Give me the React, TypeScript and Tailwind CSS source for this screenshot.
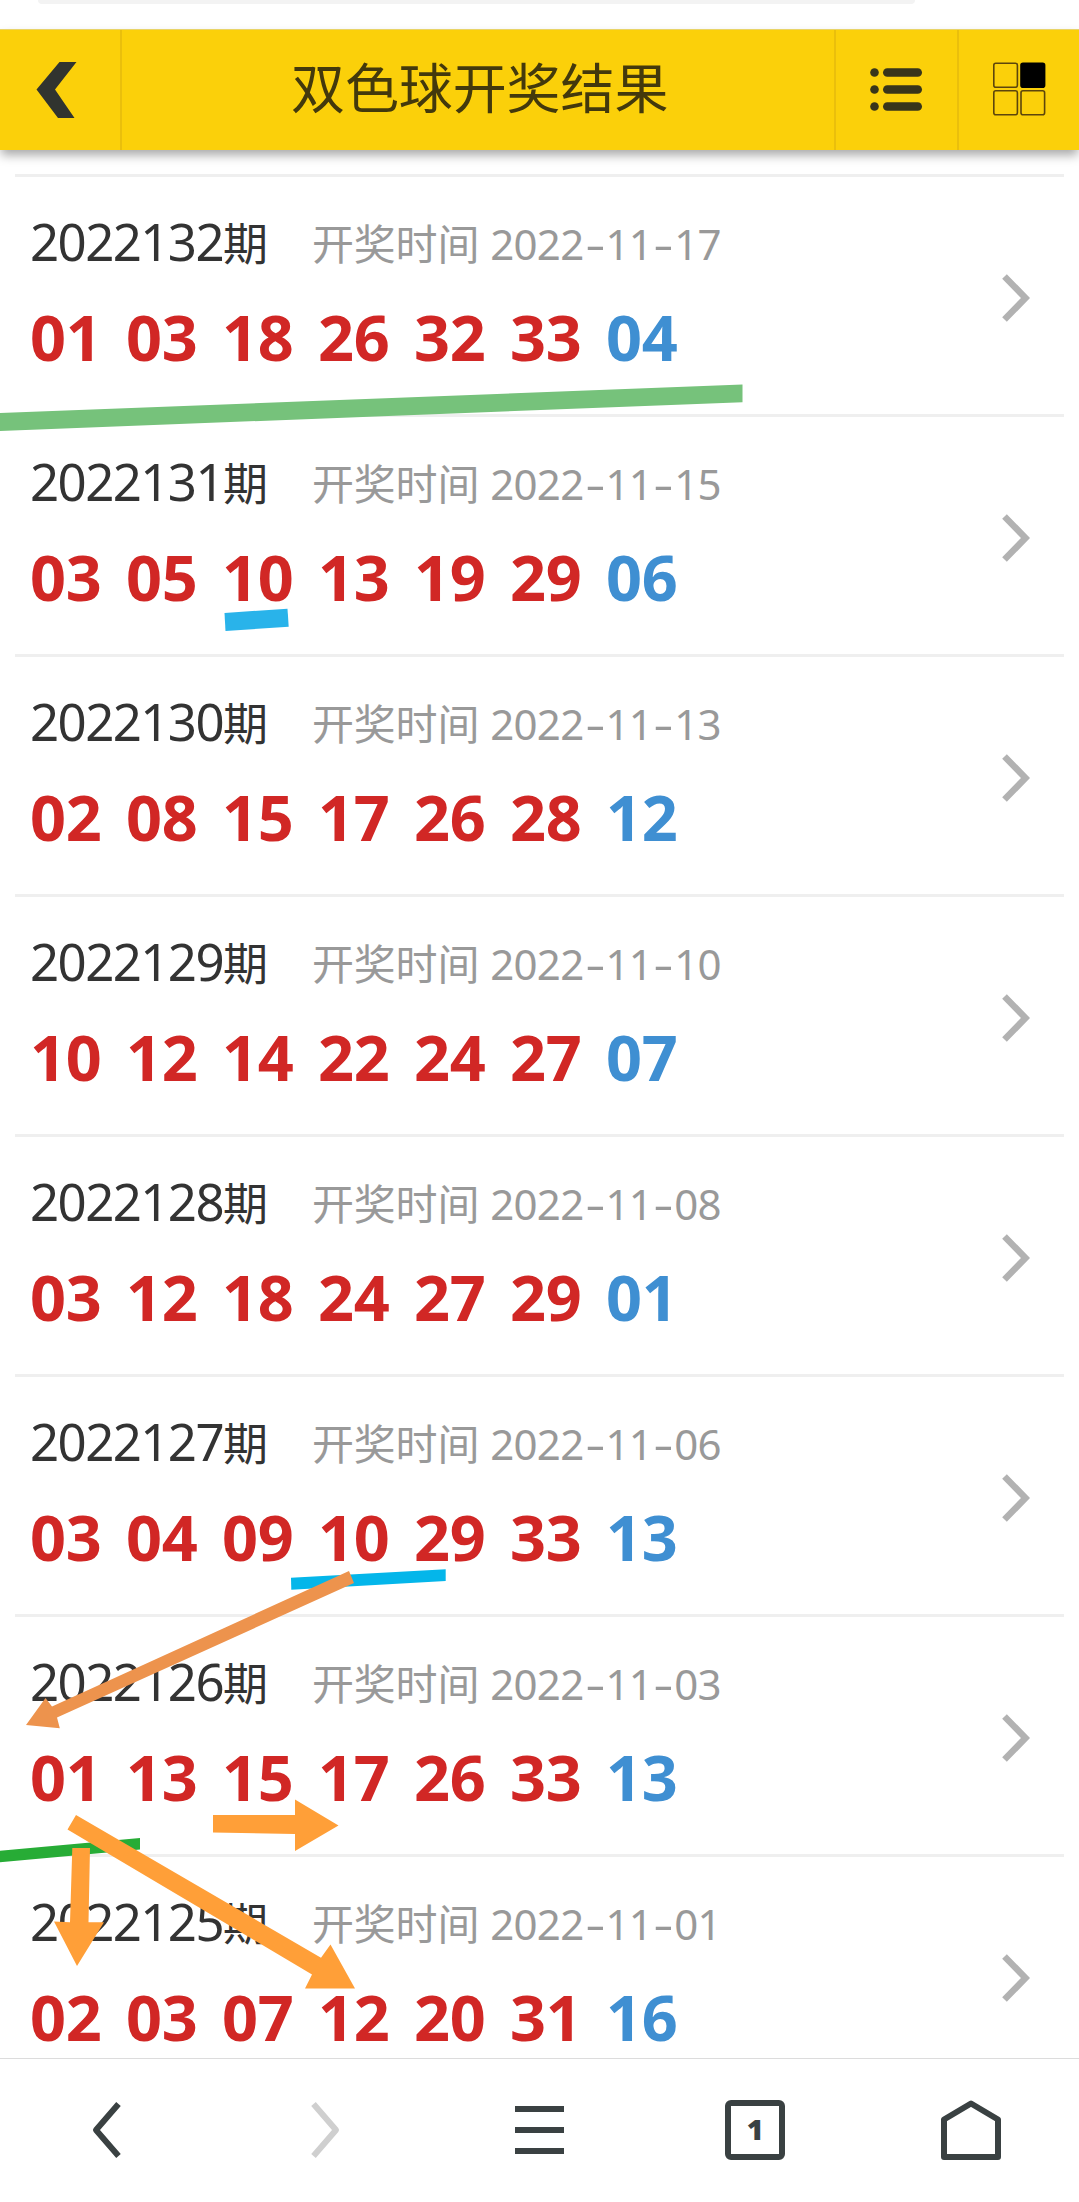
import React from 'react';

interface Draw {
  issue: string;
  date: string;
  reds: string[];
  blue: string;
}

const draws: Draw[] = [
  { issue: '2022132', date: '2022-11-17', reds: ['01', '03', '18', '26', '32', '33'], blue: '04' },
  { issue: '2022131', date: '2022-11-15', reds: ['03', '05', '10', '13', '19', '29'], blue: '06' },
  { issue: '2022130', date: '2022-11-13', reds: ['02', '08', '15', '17', '26', '28'], blue: '12' },
  { issue: '2022129', date: '2022-11-10', reds: ['10', '12', '14', '22', '24', '27'], blue: '07' },
  { issue: '2022128', date: '2022-11-08', reds: ['03', '12', '18', '24', '27', '29'], blue: '01' },
  { issue: '2022127', date: '2022-11-06', reds: ['03', '04', '09', '10', '29', '33'], blue: '13' },
  { issue: '2022126', date: '2022-11-03', reds: ['01', '13', '15', '17', '26', '33'], blue: '13' },
  { issue: '2022125', date: '2022-11-01', reds: ['02', '03', '07', '12', '20', '31'], blue: '16' },
];

const Header: React.FC = () => {
  return (
    <header className="relative z-10 flex h-[121px] shrink-0 border-t border-[#e9d468] bg-[#fbd00a] shadow-[0_6px_10px_-1px_rgba(0,0,0,0.35)]">
      <button className="flex w-[122px] items-center border-r-2 border-[#eabf0c] pl-9">
        <svg width="41" height="56" viewBox="0 0 41 56" fill="#31342f">
          <path d="M23.5 0H40.5L19 27.5L38.5 56H22L0.5 27.5Z" />
        </svg>
      </button>
      <h1 className="flex flex-1 items-center pb-1 pl-[169px] text-[54px] leading-none tracking-[-0.1px] text-[#43390c]">
        双色球开奖结果
      </h1>
      <button className="flex w-[123px] items-center justify-center border-l-2 border-[#eabf0c] pr-px">
        <svg width="54" height="46" viewBox="0 0 54 46" fill="#38351a">
          {[5.5, 22.5, 39.5].map((y) => (
            <g key={y}>
              <circle cx="5.5" cy={y} r="4.3" />
              <rect x="14" y={y - 4.3} width="39" height="8.6" rx="4.3" />
            </g>
          ))}
        </svg>
      </button>
      <button className="flex w-[122px] items-center border-l-2 border-[#eabf0c] pb-0.5 pl-[33px]">
        <svg width="54" height="54" viewBox="0 0 54 54" fill="none" stroke="#5c450c" strokeWidth="1.6">
          <rect x="1.8" y="1.3" width="23.6" height="24" rx="2" />
          <rect x="29" y="1.3" width="23.6" height="24" rx="2" fill="#000" stroke="#000" />
          <rect x="1.8" y="28.8" width="23.6" height="24" rx="2" />
          <rect x="29" y="28.8" width="23.6" height="24" rx="2" />
        </svg>
      </button>
    </header>
  );
};

const DateText: React.FC<{ value: string }> = ({ value }) => {
  return (
    <span className="ml-[11px] tracking-[-0.7px]">
      {value.split('').map((ch, i) =>
        ch === '-' ? (
          <span key={i} className="inline-block w-[22px] scale-x-[1.5] text-center">-</span>
        ) : (
          <span key={i}>{ch}</span>
        )
      )}
    </span>
  );
};

const DrawRow: React.FC<{ draw: Draw }> = ({ draw }) => {
  return (
    <li className="flex h-60 items-center justify-between border-t-[3px] border-[#efefef] pl-[15px] pr-[34px]">
      <div className="flex flex-col pb-[13px]">
        <div className="flex h-16 items-baseline leading-[64px] whitespace-nowrap">
          <span className="w-[282px] text-[45px] text-[#333]">
            <span className="text-[51px] tracking-[-1.6px]">{draw.issue}</span>期
          </span>
          <span className="relative -top-px flex items-baseline text-[42px] tracking-[-0.2px] text-[#999]">
            <span>开奖时间</span>
            <DateText value={draw.date} />
          </span>
        </div>
        <div className="mt-8 flex h-16 text-[63px] leading-[64px] font-bold tracking-[-0.2px] text-[#d12725]">
          {draw.reds.map((n) => (
            <span key={n} className="w-24">{n}</span>
          ))}
          <span className="text-[#3f8fd2]">{draw.blue}</span>
        </div>
      </div>
      <svg className="mt-1" width="28" height="48" viewBox="0 0 28 48" fill="none" stroke="#b2b2b2" strokeWidth="6.5">
        <path d="M2.5 2.5L23.5 24L2.5 45.5" />
      </svg>
    </li>
  );
};

// Pen marks drawn over the list
const Annotations: React.FC = () => {
  return (
    <svg className="pointer-events-none absolute top-0 left-0 z-20" width="1079" height="2202" viewBox="0 0 1079 2202">
      <path d="M0 413L742.5 384.5V402.3L0 431Z" fill="#76c27b" />
      <path d="M224.5 613L287.5 608.7L288.7 626.8L225.5 631Z" fill="#29b3ea" />
      <path d="M291 1577.7L445.7 1569.3V1581L291.3 1589.7Z" fill="#04b6ea" />
      <path d="M0 1850.7L140 1838V1849.5L0 1862.3Z" fill="#27ac36" />
      <path d="M349 1571L354 1583L57 1717.5L59.8 1728.3L26 1725L45.5 1698L52 1706.5Z" fill="#ed934d" />
      <g fill="#ff9f38">
        <path d="M213 1815H295V1799.5L338.5 1825.5L295 1851V1834L213 1832.5Z" />
        <path d="M76 1815L321 1957.7L330.5 1944.5L355 1988.5H305L312 1974.5L67.5 1829.5Z" />
        <path d="M72.3 1848H90L88.5 1922.3H104L77 1966L54 1921.5L70 1922.3Z" />
      </g>
    </svg>
  );
};

const BottomNav: React.FC = () => {
  return (
    <nav className="grid h-36 shrink-0 grid-cols-5 items-center justify-items-center border-t border-[#dcdcdc] bg-white pb-0.5 text-[#3a4142]">
      <svg width="60" height="60" viewBox="0 0 60 60" fill="none" stroke="currentColor" strokeWidth="6">
        <path d="M40.5 4L18 30L40.5 56" strokeLinejoin="round" />
      </svg>
      <svg width="60" height="60" viewBox="0 0 60 60" fill="none" stroke="#cfcfcf" strokeWidth="6">
        <path d="M19.5 4L42 30L19.5 56" strokeLinejoin="round" />
      </svg>
      <div className="flex w-[49px] flex-col gap-[15px]">
        <span className="h-1.5 bg-current" />
        <span className="h-1.5 bg-current" />
        <span className="h-1.5 bg-current" />
      </div>
      <div className="flex size-[60px] items-center justify-center rounded-md border-[6px] border-current text-[29px] leading-none font-black">
        <span className="relative -top-px">1</span>
      </div>
      <svg width="60" height="60" viewBox="0 0 60 60" fill="none" stroke="currentColor" strokeWidth="6" strokeLinejoin="round">
        <path d="M3 57V19.5L30 3.5L57 19.5V57Z" />
      </svg>
    </nav>
  );
};

const App: React.FC = () => {
  return (
    <div className="relative flex h-[2202px] w-[1079px] flex-col overflow-hidden bg-white font-['Noto_Sans','Noto_Sans_CJK_SC',sans-serif]">
      <div className="h-[29px] shrink-0">
        <div className="ml-[38px] h-1 w-[877px] rounded-b-lg bg-[#f3f3f3]" />
      </div>
      <Header />
      <main className="min-h-0 flex-1 overflow-hidden px-[15px] pt-6">
        <ul>
          {draws.map((draw) => (
            <DrawRow key={draw.issue} draw={draw} />
          ))}
        </ul>
      </main>
      <BottomNav />
      <Annotations />
    </div>
  );
};

export default App;
